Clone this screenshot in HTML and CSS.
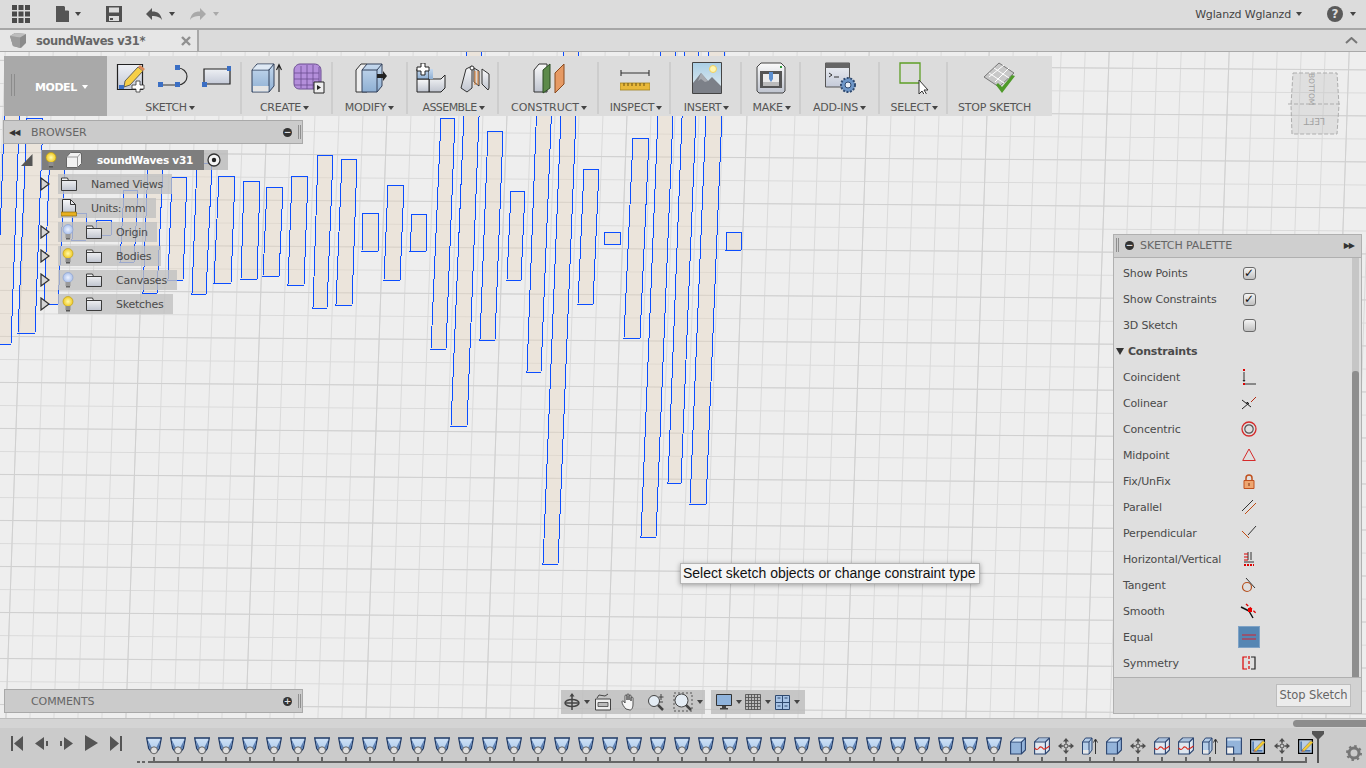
FILE: index.html
```html
<!DOCTYPE html>
<html lang="en">
<head>
<meta charset="utf-8">
<title>soundWaves v31</title>
<link rel="stylesheet" href="styles.css">
</head>
<body>
<svg class="defs" width="0" height="0" aria-hidden="true">
  <defs>
    <linearGradient id="gBlue" x1="0" y1="0" x2="0" y2="1"><stop offset="0" stop-color="#c6d9ee"/><stop offset="1" stop-color="#8eafd3"/></linearGradient>
    <linearGradient id="gGray" x1="0" y1="0" x2="0" y2="1"><stop offset="0" stop-color="#fafafa"/><stop offset="1" stop-color="#bfc4cf"/></linearGradient>
    <linearGradient id="gBack" x1="0" y1="0" x2="0" y2="1"><stop offset="0" stop-color="#eef0f4"/><stop offset="1" stop-color="#c4cad8"/></linearGradient>
    <linearGradient id="gSky" x1="0" y1="0" x2="0" y2="1"><stop offset="0" stop-color="#a9cfe6"/><stop offset="1" stop-color="#e8eef0"/></linearGradient>
    <linearGradient id="gFillet" x1="0" y1="0" x2="0" y2="1"><stop offset="0" stop-color="#cfe2f6"/><stop offset="1" stop-color="#aac8ea"/></linearGradient>
    <radialGradient id="gYellow"><stop offset="0" stop-color="#fffbb0"/><stop offset="1" stop-color="#f0c820"/></radialGradient>
    <radialGradient id="gPale"><stop offset="0" stop-color="#eef3ff"/><stop offset="1" stop-color="#a9bfea"/></radialGradient>
    <pattern id="gridMinor" width="24" height="23" patternUnits="userSpaceOnUse" patternTransform="translate(6 14) skewX(-2) skewY(0.4)">
      <path d="M.5 0V23M0 .5H24" fill="none" stroke="#dadada" stroke-width="1"/>
    </pattern>
    <pattern id="gridMajor" width="120" height="46" patternUnits="userSpaceOnUse" patternTransform="translate(30 14) skewX(-2) skewY(0.4)">
      <path d="M.5 0V46M0 .5H120" fill="none" stroke="#d0d0d0" stroke-width="1"/>
    </pattern>

    <symbol id="fillet" viewBox="0 0 16 18"><path d="M.7 1h14.600l-2 10.500L10.500 15h-5L2.700 11.500z" fill="url(#gFillet)" stroke="#1f3a66" stroke-width="1.300"/><path d="M1.600 2.500L6.500 12H3.400zM14.400 2.500L9.500 12h3.100z" fill="#5f83b6"/><circle cx="8" cy="13.300" r="3.500" fill="#dedede" stroke="#5a5a5a" stroke-width=".9"/></symbol>
    <symbol id="box" viewBox="0 0 16 18"><path d="M.6 5l4-4h10.800v12l-4 4H.6z" fill="#94b4da" stroke="#2a4470" stroke-width="1.100"/><path d="M.6 5h10.800v12M11.400 5l4-4" fill="none" stroke="#2a4470" stroke-width="1.100"/><path d="M1.500 4.500l3.500-3h9.500l-3.500 3z" fill="#d6e4f3"/></symbol>
    <symbol id="boxred" viewBox="0 0 16 18"><path d="M.6 5l4-4h10.800v12l-4 4H.6z" fill="#dfe7f0" stroke="#2a4470" stroke-width="1.100"/><path d="M1.500 4.500l3.500-3h9.500l-3.500 3z" fill="#a9c2de"/><path d="M.6 5h10.800v12M11.400 5l4-4" fill="none" stroke="#2a4470" stroke-width="1.100"/><path d="M.5 11c2 2 3 2 4.500 0s3-1 4 .5 3 0 6.500-2.500" fill="none" stroke="#d8281c" stroke-width="1.100"/></symbol>
    <symbol id="move" viewBox="0 0 16 18"><g fill="#4e4e4e"><path d="M8 1l3 3.500H5zM8 17l3-3.500H5zM0 9l3.500-3v6zM16 9l-3.500-3v6z"/><path d="M7.300 4h1.400v2.500H7.300zM7.300 11.500h1.400V14H7.300zM3 8.300h2.500v1.400H3zM10.500 8.300H13v1.400h-2.500z"/></g><circle cx="8" cy="9" r="2" fill="none" stroke="#4e4e4e"/></symbol>
    <symbol id="extrude" viewBox="0 0 16 18"><path d="M.5 5l3-4h6.500v12l-3 4H.5z" fill="#b5cde8" stroke="#2a4470"/><path d="M.5 5h6.500v12M7 5l3-4" fill="none" stroke="#2a4470"/><path d="M1 13h5.500v3.500H1z" fill="#e8e8e8"/><path d="M13.500 17V3M11.500 5.500l2-3.500 2 3.500" fill="none" stroke="#333"/></symbol>
    <symbol id="combine" viewBox="0 0 16 18"><path d="M.6 1h14.800v16H.6z" fill="#94b4da" stroke="#2a4470" stroke-width="1.100"/><path d="M.6 10h7v7h-7z" fill="#eee" stroke="#2a4470" stroke-width="1.100"/><path d="M1.500 1.600h13v2h-13z" fill="#d6e4f3"/></symbol>
    <symbol id="tlsketch" viewBox="0 0 18 18"><path d="M.7 1.700h15.500v15.500H.7z" fill="#b9cde4" stroke="#000" stroke-width="1.400"/><path d="M3.500 4v10.500H14" fill="none" stroke="#2a5a9a" stroke-width="1.300"/><path d="M4.500 13.500L14.500 3l2.500 2L7 15z" fill="#f6cc32" stroke="#5a5a5a" stroke-width=".5"/><path d="M4.500 13.500L7 15l-3 1z" fill="#cf7a4a"/></symbol>

    <symbol id="bulbOn" viewBox="0 0 12 16"><circle cx="6" cy="5.500" r="5" fill="url(#gYellow)" stroke="#b99a10" stroke-width=".6"/><path d="M3.500 10h5v4h-5z" fill="#8d8d8d"/><path d="M4 14h4v1.500H4z" fill="#555"/></symbol>
    <symbol id="bulbOff" viewBox="0 0 12 16"><circle cx="6" cy="5.500" r="5" fill="url(#gPale)" stroke="#8aa0cc" stroke-width=".6"/><path d="M3.500 10h5v4h-5z" fill="#9a9a9a"/><path d="M4 14h4v1.500H4z" fill="#666"/></symbol>
    <symbol id="folder" viewBox="0 0 16 14"><path d="M.5 13.500V1h6l1 2.500h8v10z" fill="url(#gGray)" stroke="#3b3b3b"/><path d="M.5 3.500h15" stroke="#3b3b3b" fill="none"/></symbol>
    <symbol id="tri" viewBox="0 0 10 14"><path d="M1 1l8 6-8 6z" fill="#d5d5d5" stroke="#2f2f2f" stroke-width="1.200"/></symbol>
  </defs>
</svg>

<div class="app">
  <header class="topbar">
    <div class="top-left">
      <svg class="ic-grid" width="18" height="18" viewBox="0 0 18 18"><path d="M0 0h5v5H0zM6.500 0h5v5h-5zM13 0h5v5h-5zM0 6.500h5v5H0zM6.500 6.500h5v5h-5zM13 6.500h5v5h-5zM0 13h5v5H0zM6.500 13h5v5h-5zM13 13h5v5h-5z" fill="#4b4b4b"/></svg>
      <span class="top-item ti-file"><svg width="14" height="16" viewBox="0 0 14 16"><path d="M0 0h8l5 5v11H0z" fill="#555"/><path d="M9 0l4.500 4.500H9z" fill="#ddd"/></svg><i class="caret dark"></i></span>
      <svg class="ti-save" width="16" height="16" viewBox="0 0 16 16"><path d="M0 0h16v16H0z" fill="#505050"/><path d="M3 1.500h10v5H3z" fill="#dcdcdc"/><path d="M3 10h10v5H3z" fill="#dcdcdc"/><path d="M4 12h3v2H4z" fill="#505050"/></svg>
      <span class="top-item ti-undo"><svg width="16" height="12" viewBox="0 0 16 12"><path d="M6 0v3.500c6 0 9 2.500 10 8.500-2-3-5-4-10-4v4L0 6z" fill="#555"/></svg><i class="caret dark"></i></span>
      <span class="top-item ti-redo"><svg width="16" height="12" viewBox="0 0 16 12"><path d="M10 0v3.500C4 3.500 1 6 0 12c2-3 5-4 10-4v4l6-6z" fill="#a9a9a9"/></svg><i class="caret light"></i></span>
    </div>
    <div class="top-right">
      <span class="user">Wglanzd Wglanzd</span><i class="caret dark"></i>
      <span class="help">?</span><i class="caret dark"></i>
    </div>
  </header>

  <nav class="tabbar">
    <div class="tab">
      <svg width="16" height="15" viewBox="0 0 16 15"><path d="M0 3l5-3 11 1v9l-5 5-8-2z" fill="#8b8b8b"/><path d="M0 3l10 1.500V15l-7-2z" fill="#9c9c9c"/><path d="M0 3l5-3 11 1-6 3.500z" fill="#bdbdbd"/></svg>
      <span class="tab-title">soundWaves v31*</span>
      <svg class="tab-close" width="10" height="10" viewBox="0 0 10 10"><path d="M1 1l8 8M9 1l-8 8" stroke="#909090" stroke-width="2.400" fill="none"/></svg>
    </div>
    <svg class="tab-collapse" width="13" height="7" viewBox="0 0 13 7"><path d="M1 6l5.500-5L12 6" fill="none" stroke="#777" stroke-width="2"/></svg>
  </nav>

  <main class="viewport">
    <svg class="scene" width="1366" height="666" viewBox="0 52 1366 666">
      <rect x="0" y="52" width="1366" height="666" fill="#eeeeee"/>
      <rect x="0" y="52" width="1366" height="666" fill="url(#gridMinor)"/>
      <rect x="0" y="52" width="1366" height="666" fill="url(#gridMajor)"/>
      <g class="bars">
        <polygon points="5,100 20,100 11,344 -4,344"/>
        <polygon points="27,118 43,118 35,333 18,333"/>
        <polygon points="50,150 66,150 58,304 44,304"/>
        <polygon points="73,213 87,213 86,240 72,240"/>
        <polygon points="97,220 112,220 111,235 96,235"/>
        <polygon points="124,190 138,190 134,262 120,262"/>
        <polygon points="148,165 163,165 157,293 143,293"/>
        <polygon points="172,177 187,177 183,280 168,280"/>
        <polygon points="197,163 212,163 206,294 192,294"/>
        <polygon points="219,176 235,176 231,283 214,283"/>
        <polygon points="244,181 260,181 257,279 241,279"/>
        <polygon points="267,187 283,187 279,276 263,276"/>
        <polygon points="292,176 308,176 304,285 288,285"/>
        <polygon points="318,155 333,155 327,308 313,308"/>
        <polygon points="342,159 357,159 352,305 336,305"/>
        <polygon points="363,213 379,213 378,251 362,251"/>
        <polygon points="388,185 404,185 400,280 384,280"/>
        <polygon points="412,214 427,214 426,251 410,251"/>
        <polygon points="441,118 455,118 446,349 431,349"/>
        <polygon points="467,40 482,40 467,426 451,426"/>
        <polygon points="488,131 503,131 495,340 480,340"/>
        <polygon points="511,191 525,191 521,280 507,280"/>
        <polygon points="537,100 552,100 541,372 527,372"/>
        <polygon points="564,40 579,40 558,564 543,564"/>
        <polygon points="584,169 599,169 593,304 578,304"/>
        <polygon points="604,232 620,232 620,244 604,244"/>
        <polygon points="633,138 649,138 640,338 624,338"/>
        <polygon points="661,40 676,40 656,537 641,537"/>
        <polygon points="685,40 699,40 681,483 668,483"/>
        <polygon points="709,40 725,40 706,504 690,504"/>
        <polygon points="727,232 742,232 741,250 726,250"/>
      </g>
      <g class="cube">
        <path class="cube-face" d="M1293 73h44l2 32-2 29h-45l-1-29z"/>
        <path class="cube-line" d="M1293 73h44l2 32-2 29h-45l-1-29zM1288 104h52"/>
        <text class="cube-text top" transform="translate(1309 73) rotate(90)">BOTTOM</text>
        <text class="cube-text" transform="translate(1325 118) rotate(180)">LEFT</text>
      </g>
    </svg>

    <section class="toolbar">
      <div class="model"><span class="grip"></span><span class="model-label">MODEL</span><i class="caret white"></i></div>

      <div class="tool-group w-sketch">
        <div class="tool-icons gap-sketch">
          <svg width="30" height="30" viewBox="0 0 30 30"><path d="M1.500 1.500h25v25h-25z" fill="url(#gBack)" stroke="#222" stroke-width="1.200"/><path d="M9 18L22 4l5 4-13 14-6 2z" fill="#f6cf46" stroke="#444" stroke-width=".8"/><path d="M22 4l2-2 5 4-2 2z" fill="#d98b5a"/><path d="M3 22h5v4H3z" fill="#3b6fc4"/><path d="M21 19h4v4h4v4h-4v3h-4v-3h-4v-4h4z" transform="translate(-1 -1)" fill="#fff" stroke="#333" stroke-width=".8"/></svg>
          <svg width="32" height="30" viewBox="0 0 32 30"><path d="M3 22h17a9 8.500 0 0 0 0-17" fill="none" stroke="#333" stroke-width="1.200"/><path d="M0 19h5v5H0zM17 19h5v5h-5zM17 2h5v5h-5z" fill="#3b6fc4"/></svg>
          <svg width="30" height="30" viewBox="0 0 30 30"><path d="M2 6h26v15H2z" fill="url(#gBack)" stroke="#222" stroke-width="1.200"/><path d="M0 19h5v5H0zM25 3h4v5h-4z" fill="#3b6fc4"/></svg>
        </div>
        <div class="tool-label">SKETCH<i class="caret dark"></i></div>
      </div>

      <div class="tool-group w-create">
        <div class="tool-icons gap-create">
          <svg width="32" height="32" viewBox="0 0 32 32"><path d="M1 8l5-6h17v22l-5 6H1z" fill="url(#gBlue)" stroke="#33415a"/><path d="M1 8h17v22M18 8l5-6" fill="none" stroke="#33415a"/><path d="M1.500 7.500l5-5h15l-4.500 5z" fill="#dfe9f4"/><path d="M2 24h15.500v5.500H2z" fill="#e4e4e4"/><path d="M28 30V4M25.500 8L28 2.500 30.500 8" fill="none" stroke="#222" stroke-width="1.100"/></svg>
          <svg width="32" height="32" viewBox="0 0 32 32"><path d="M1 8c0-3 3-6 6-6h14c5 0 7 3 7 7v18H7c-4 0-6-2-6-6z" fill="#b48fdb" stroke="#6a4c91"/><path d="M1 11h25M1 17h25M1 23h20M8 4v22M14 3v24M20 3v24M26 5v17" fill="none" stroke="#6a4c91" stroke-width=".8"/><path d="M21 20h10v11H21z" fill="#eee" stroke="#222"/><path d="M24 23v5l4-2.500z" fill="#222"/></svg>
        </div>
        <div class="tool-label">CREATE<i class="caret dark"></i></div>
      </div>

      <div class="tool-group w-modify">
        <div class="tool-icons">
          <svg width="32" height="32" viewBox="0 0 32 32"><path d="M1 8l5-6h6v28H1z" fill="#eee" stroke="#333"/><path d="M7 8l5-6h15v22l-5 6H7z" fill="url(#gBlue)" stroke="#33415a"/><path d="M7 8h15v22M22 8l5-6" fill="none" stroke="#33415a"/><path d="M22 12h6v-3l4 5-4 5v-3h-6z" fill="#222"/></svg>
        </div>
        <div class="tool-label">MODIFY<i class="caret dark"></i></div>
      </div>

      <div class="tool-group w-assemble">
        <div class="tool-icons gap-assemble">
          <svg width="30" height="30" viewBox="0 0 30 30"><path d="M13 16h12l4-4v13l-4 4H13z" fill="url(#gGray)" stroke="#222"/><path d="M1 16h12v13H1z" fill="url(#gGray)" stroke="#222"/><path d="M1 16V6h12v10z" fill="url(#gBlue)" stroke="#222"/><path d="M13 6h6l-2 0v10h-4z" fill="url(#gBlue)"/><path d="M5 0h4v4h4v4H9v4H5V8H1V4h4z" fill="#fff" stroke="#222"/></svg>
          <svg width="30" height="30" viewBox="0 0 30 30"><path d="M1 25L6 6l6-3v22l-5 4z" fill="url(#gGray)" stroke="#333"/><path d="M29 25V11l-7-5v15l6 6z" fill="url(#gGray)" stroke="#333"/><path d="M14 5l5 3v15l-5-4z" fill="#d6d6d6" stroke="#333"/><path d="M15 8v14M18 8v14" stroke="#e08030" fill="none"/><circle cx="12" cy="5" r="2" fill="#fff" stroke="#333"/></svg>
        </div>
        <div class="tool-label">ASSEMBLE<i class="caret dark"></i></div>
      </div>

      <div class="tool-group w-construct">
        <div class="tool-icons">
          <svg width="32" height="32" viewBox="0 0 32 32"><path d="M1 8l5-6h8v28H1z" fill="url(#gGray)" stroke="#333"/><path d="M10 8l7-6v24l-7 5z" fill="#5c8a4a" stroke="#2d4d24"/><path d="M22 11l9-9v20l-9 9z" fill="#e69a64" stroke="#8a4a1e"/></svg>
        </div>
        <div class="tool-label">CONSTRUCT<i class="caret dark"></i></div>
      </div>

      <div class="tool-group w-inspect">
        <div class="tool-icons">
          <svg width="30" height="30" viewBox="0 0 30 30"><path d="M1 7v6M29 7v6M1 10h28" fill="none" stroke="#333" stroke-width="1.100"/><path d="M0 20h30v7H0z" fill="#e8b83a" stroke="#a08020" stroke-width=".8"/><path d="M4 20v3M8 20v3M12 20v3M16 20v3M20 20v3M24 20v3" stroke="#6a5010" fill="none"/></svg>
        </div>
        <div class="tool-label">INSPECT<i class="caret dark"></i></div>
      </div>

      <div class="tool-group w-insert">
        <div class="tool-icons">
          <svg width="30" height="32" viewBox="0 0 30 32"><path d="M.5.5h29v31H.5z" fill="url(#gSky)" stroke="#444"/><circle cx="21" cy="7" r="3.500" fill="#fff6b0" stroke="#f0d060"/><path d="M1 31V21l8-10 7 8 4-4 9 9v7z" fill="#7c8088"/><path d="M9 11l7 8-3 1-4-3-3 2z" fill="#a7aab0"/></svg>
        </div>
        <div class="tool-label">INSERT<i class="caret dark"></i></div>
      </div>

      <div class="tool-group w-make">
        <div class="tool-icons">
          <svg width="30" height="32" viewBox="0 0 30 32"><path d="M1 5l4-4h20l4 4v24l-2 2H3l-2-2z" fill="url(#gGray)" stroke="#444"/><path d="M4 9h22v17H4z" fill="#555"/><path d="M7 12h16v11H7z" fill="#ececec"/><path d="M13 10h4v7l-2 3-2-3z" fill="#5b8fd0"/><path d="M7 20h16v4H7z" fill="#bbb"/><path d="M24 4h2v2h-2z" fill="#2e9a3a"/></svg>
        </div>
        <div class="tool-label">MAKE<i class="caret dark"></i></div>
      </div>

      <div class="tool-group w-addins">
        <div class="tool-icons">
          <svg width="32" height="32" viewBox="0 0 32 32"><path d="M.5 1h24v24H.5z" fill="url(#gBack)" stroke="#555"/><path d="M.5 1h24v5H.5z" fill="#666"/><path d="M4 11l3 2-3 2M9 15h5" fill="none" stroke="#333"/><circle cx="23" cy="23" r="7" fill="#6d96c8" stroke="#2f4a70" stroke-width="2" stroke-dasharray="2 1.500"/><circle cx="23" cy="23" r="3" fill="#e8eef6" stroke="#2f4a70"/></svg>
        </div>
        <div class="tool-label">ADD-INS<i class="caret dark"></i></div>
      </div>

      <div class="tool-group w-select">
        <div class="tool-icons">
          <svg width="32" height="32" viewBox="0 0 32 32"><path d="M1 1h20v20H1z" fill="none" stroke="#5e9e26" stroke-width="1.300"/><path d="M20 18v14l3-3 3 5 2-1-3-5h4z" fill="#fff" stroke="#333"/></svg>
        </div>
        <div class="tool-label">SELECT<i class="caret dark"></i></div>
      </div>

      <div class="tool-group w-stop">
        <div class="tool-icons">
          <svg width="34" height="32" viewBox="0 0 34 32"><path d="M1 15L16 1l15 10-15 14z" fill="#c8c8c8" stroke="#777"/><path d="M6 11l15 10M11 6l15 10M12 20L26 6M6 15L21 3" fill="none" stroke="#fff"/><path d="M15 21l4 4 10-12 3 1-13 17-6-8z" fill="#4f9a2a"/></svg>
        </div>
        <div class="tool-label">STOP SKETCH</div>
      </div>
    </section>

    <aside class="browser">
      <div class="panel-head">
        <span class="dbl-left">◀◀</span>
        <span class="panel-title">BROWSER</span>
        <span class="round-btn">−</span>
        <span class="panel-grip"></span>
      </div>
      <div class="tree">
        <div class="tree-root">
          <svg class="root-tri" width="12" height="12" viewBox="0 0 12 12"><path d="M11.500 0v12H0z" fill="#555"/></svg>
          <div class="root-row">
            <div class="root-dark">
              <svg width="12" height="16" viewBox="0 0 12 16"><use href="#bulbOn"/></svg>
              <svg class="root-cube" width="16" height="16" viewBox="0 0 16 16"><path d="M.5 5l4-4.500h11v11l-4 4H.5z" fill="#f2f2f2" stroke="#666"/><path d="M.5 5h11v10.500M11.500 5l4-4.500" fill="none" stroke="#999"/></svg>
              <span class="root-name">soundWaves v31</span>
            </div>
            <svg class="root-radio" width="14" height="14" viewBox="0 0 14 14"><circle cx="7" cy="7" r="6" fill="#f4f4f4" stroke="#333" stroke-width="1.300"/><circle cx="7" cy="7" r="2.200" fill="#222"/></svg>
          </div>
        </div>
        <div class="node"><svg class="node-tri" width="10" height="14"><use href="#tri"/></svg><div class="node-row w-named"><svg class="fold-a" width="16" height="14"><use href="#folder"/></svg><span class="lab-a">Named Views</span></div></div>
        <div class="node"><span class="node-gap"></span><div class="node-row w-units"><svg class="fold-a" width="16" height="18" viewBox="0 0 16 18"><path d="M1.500 14V.5h8l5 5V14z" fill="url(#gGray)" stroke="#333"/><path d="M9.500.5v5h5" fill="none" stroke="#333"/><path d="M0 13h15.500v4H0z" fill="#e8b020" stroke="#8a6a10" stroke-width=".7"/></svg><span class="lab-a">Units: mm</span></div></div>
        <div class="node"><svg class="node-tri" width="10" height="14"><use href="#tri"/></svg><div class="node-row w-origin"><svg class="bulb" width="12" height="16"><use href="#bulbOff"/></svg><svg class="fold-b" width="16" height="14"><use href="#folder"/></svg><span class="lab-b">Origin</span></div></div>
        <div class="node"><svg class="node-tri" width="10" height="14"><use href="#tri"/></svg><div class="node-row w-bodies"><svg class="bulb" width="12" height="16"><use href="#bulbOn"/></svg><svg class="fold-b" width="16" height="14"><use href="#folder"/></svg><span class="lab-b">Bodies</span></div></div>
        <div class="node"><svg class="node-tri" width="10" height="14"><use href="#tri"/></svg><div class="node-row w-canvases"><svg class="bulb" width="12" height="16"><use href="#bulbOff"/></svg><svg class="fold-b" width="16" height="14"><use href="#folder"/></svg><span class="lab-b">Canvases</span></div></div>
        <div class="node"><svg class="node-tri" width="10" height="14"><use href="#tri"/></svg><div class="node-row w-sketches"><svg class="bulb" width="12" height="16"><use href="#bulbOn"/></svg><svg class="fold-b" width="16" height="14"><use href="#folder"/></svg><span class="lab-b">Sketches</span></div></div>
      </div>
    </aside>

    <aside class="comments">
      <span class="panel-title">COMMENTS</span>
      <span class="round-btn">+</span>
      <span class="panel-grip"></span>
    </aside>

    <div class="navbar">
      <div class="nav-seg seg-a">
        <svg width="16" height="18" viewBox="0 0 16 18"><path d="M8 1v16M1 10h14" stroke="#444" stroke-width="1.500" fill="none"/><ellipse cx="8" cy="10" rx="7" ry="3.500" fill="none" stroke="#444" stroke-width="1.500"/><path d="M8 0l2.500 3.500h-5z" fill="#444"/></svg><i class="caret dark"></i>
        <svg class="na" width="16" height="18" viewBox="0 0 16 18"><path d="M.5 6h15v11H.5z" fill="#eee" stroke="#444"/><path d="M3 9.500h10v4H3z" fill="#bbb" stroke="#444" stroke-width=".8"/><path d="M2 5l2-3 6 1 3-2" fill="none" stroke="#444"/></svg>
        <svg class="nb-hand" width="18" height="18" viewBox="0 0 18 18"><path d="M5 16c-2-2-4-5-4-7s2-1 3 1V3c0-1.500 2-1.500 2 0v4-5c0-1.500 2-1.500 2 0v5-4c0-1.500 2-1.500 2 0v5-3c0-1.500 2-1 2 0v6c0 3-1 6-3 6z" fill="#f6f6f6" stroke="#444" stroke-width=".9"/></svg>
        <svg class="nb" width="18" height="18" viewBox="0 0 18 18"><circle cx="7" cy="8" r="5.500" fill="#e4ecf4" stroke="#444"/><path d="M11 12l5 5" stroke="#444" stroke-width="2.500"/><path d="M14 1v6M11.500 4h5M12 9h4" stroke="#444" fill="none"/></svg>
        <svg class="nb" width="20" height="20" viewBox="0 0 20 20"><path d="M1 1h18v18H1z" fill="none" stroke="#555" stroke-dasharray="2 2"/><circle cx="8.500" cy="8.500" r="6.500" fill="#e4ecf4" stroke="#444"/><path d="M13 13l5 5" stroke="#444" stroke-width="2.500"/></svg><i class="caret dark"></i>
      </div>
      <div class="nav-seg seg-b">
        <svg width="16" height="16" viewBox="0 0 16 16"><path d="M.5.5h15v11H.5z" fill="#8fb3dc" stroke="#333"/><path d="M6 12h4v2h2v1.500H4V14h2z" fill="#444"/></svg><i class="caret dark"></i>
        <svg class="nc" width="16" height="16" viewBox="0 0 16 16"><path d="M.5.5h15v15H.5zM3.500 0v16M6.500 0v16M9.500 0v16M12.500 0v16M0 3.500h16M0 6.500h16M0 9.500h16M0 12.500h16" fill="#bbb" stroke="#555" stroke-width=".9"/></svg><i class="caret dark"></i>
        <svg class="nd" width="15" height="15" viewBox="0 0 15 15"><path d="M.5.5h14v14H.5z" fill="#a8c4e6" stroke="#2f4a70"/><path d="M.5 7.500h14M7.500 0v15" stroke="#2f4a70"/><path d="M2.500 3h3M9.500 3h3M2.500 11h3M9.500 11h3" stroke="#2f4a70"/></svg><i class="caret dark"></i>
      </div>
    </div>

    <div class="tooltip">Select sketch objects or change constraint type</div>

    <aside class="palette">
      <div class="pal-head">
        <span class="panel-grip left"></span>
        <span class="round-btn">−</span>
        <span class="panel-title">SKETCH PALETTE</span>
        <span class="dbl-right">▶▶</span>
      </div>
      <div class="pal-body">
        <div class="pal-list">
          <div class="pal-row"><span>Show Points</span><span class="check on">✓</span></div>
          <div class="pal-row"><span>Show Constraints</span><span class="check on">✓</span></div>
          <div class="pal-row"><span>3D Sketch</span><span class="check"></span></div>
          <div class="pal-section"><i class="sec-tri"></i>Constraints</div>
          <div class="pal-row"><span>Coincident</span><svg width="14" height="18" viewBox="0 0 14 18"><path d="M2 4v8" stroke="#333"/><path d="M0.500 12l1.500 2 1.500-2z" fill="#222"/><path d="M1 1h2v2H1zM1 15h2v2H1z" fill="#d00"/><path d="M3 16h11" stroke="#333"/></svg></div>
          <div class="pal-row"><span>Colinear</span><svg width="16" height="14" viewBox="0 0 16 14"><path d="M1 13L8 7" stroke="#222"/><path d="M10 6l5-5" stroke="#b52a10"/><path d="M1 4l9 7" stroke="#222"/><path d="M5 6l3 3-1-3z" fill="#111"/></svg></div>
          <div class="pal-row"><span>Concentric</span><svg width="16" height="16" viewBox="0 0 16 16"><circle cx="8" cy="8" r="7" fill="none" stroke="#d52a2a" stroke-width="1.300"/><circle cx="8" cy="8" r="4.200" fill="none" stroke="#555" stroke-width="1.200"/></svg></div>
          <div class="pal-row"><span>Midpoint</span><svg width="14" height="14" viewBox="0 0 14 14"><path d="M7 1l6.300 11.500H.7z" fill="none" stroke="#d52a2a"/></svg></div>
          <div class="pal-row"><span>Fix/UnFix</span><svg width="12" height="15" viewBox="0 0 12 15"><path d="M3 7V4a3 3 0 0 1 6 0v3" fill="none" stroke="#c0501e" stroke-width="1.500"/><path d="M1 6.500h10v8H1z" fill="#eea670" stroke="#c0501e"/><path d="M5.500 9h1v3h-1z" fill="#7a3010"/></svg></div>
          <div class="pal-row"><span>Parallel</span><svg width="16" height="16" viewBox="0 0 16 16"><path d="M1 12L12 1" stroke="#333"/><path d="M4 15L15 4" stroke="#c04a10"/></svg></div>
          <div class="pal-row"><span>Perpendicular</span><svg width="16" height="16" viewBox="0 0 16 16"><path d="M1 6l7 7" stroke="#c04a10"/><path d="M7 10l8-9" stroke="#333"/></svg></div>
          <div class="pal-row"><span>Horizontal/Vertical</span><svg width="12" height="16" viewBox="0 0 12 16"><path d="M5 1v8M8 1v8" stroke="#333"/><path d="M1 3h4M1 6h4M1 9h4" stroke="#d00"/><path d="M1 11h10" stroke="#333"/><path d="M1 14h10" stroke="#d00" stroke-width="2" stroke-dasharray="2 1"/></svg></div>
          <div class="pal-row"><span>Tangent</span><svg width="16" height="16" viewBox="0 0 16 16"><circle cx="6" cy="10" r="4.500" fill="none" stroke="#b5501e" stroke-width="1.200"/><path d="M5 1l9 10" stroke="#333"/></svg></div>
          <div class="pal-row"><span>Smooth</span><svg width="18" height="16" viewBox="0 0 18 16"><path d="M1 4l8 4M9 8l4 7" stroke="#111" stroke-width="1.400"/><path d="M6 1l11 10" stroke="#d00" stroke-width="1.400" stroke-dasharray="3 2"/><path d="M8 5h4v4H8z" fill="#e00"/></svg></div>
          <div class="pal-row"><span>Equal</span><span class="eq-active"><svg width="14" height="6" viewBox="0 0 14 6"><path d="M0 1h14M0 5h14" stroke="#d8202c"/></svg></span></div>
          <div class="pal-row"><span>Symmetry</span><svg width="14" height="14" viewBox="0 0 14 14"><path d="M5 1H1v12h4" fill="none" stroke="#d00" stroke-width="1.200"/><path d="M9 1h4v12H9" fill="none" stroke="#222" stroke-width="1.200"/><path d="M7 0v14" stroke="#d00" stroke-width="1.200" stroke-dasharray="3 2"/></svg></div>
        </div>
        <div class="pal-scroll"><div class="pal-thumb"></div></div>
      </div>
      <div class="pal-foot"><span class="stop-btn">Stop Sketch</span></div>
    </aside>
  </main>

  <footer class="timeline">
    <div class="tl-band"><div class="tl-scroll"></div></div>
    <div class="tl-row">
      <div class="tl-controls">
        <svg width="12" height="15" viewBox="0 0 12 15"><path d="M0 0h2v15H0zM12 0v15L3 7.500z" fill="#555"/></svg>
        <svg width="13" height="15" viewBox="0 0 13 15"><path d="M9 1v13L0 7.500zM11 5h2v5h-2z" fill="#555"/></svg>
        <svg width="13" height="15" viewBox="0 0 13 15"><path d="M4 1v13l9-6.500zM0 5h2v5H0z" fill="#555"/></svg>
        <svg width="13" height="16" viewBox="0 0 13 16"><path d="M0 0v16l13-8z" fill="#555"/></svg>
        <svg width="12" height="15" viewBox="0 0 12 15"><path d="M10 0h2v15h-2zM0 0v15l9-7.500z" fill="#555"/></svg>
      </div>
      <div class="tl-track">
        <div class="tl-item"><svg width="16" height="18"><use href="#fillet"/></svg></div><div class="tl-item"><svg width="16" height="18"><use href="#fillet"/></svg></div><div class="tl-item"><svg width="16" height="18"><use href="#fillet"/></svg></div><div class="tl-item"><svg width="16" height="18"><use href="#fillet"/></svg></div><div class="tl-item"><svg width="16" height="18"><use href="#fillet"/></svg></div><div class="tl-item"><svg width="16" height="18"><use href="#fillet"/></svg></div>
        <div class="tl-item"><svg width="16" height="18"><use href="#fillet"/></svg></div><div class="tl-item"><svg width="16" height="18"><use href="#fillet"/></svg></div><div class="tl-item"><svg width="16" height="18"><use href="#fillet"/></svg></div><div class="tl-item"><svg width="16" height="18"><use href="#fillet"/></svg></div><div class="tl-item"><svg width="16" height="18"><use href="#fillet"/></svg></div><div class="tl-item"><svg width="16" height="18"><use href="#fillet"/></svg></div>
        <div class="tl-item"><svg width="16" height="18"><use href="#fillet"/></svg></div><div class="tl-item"><svg width="16" height="18"><use href="#fillet"/></svg></div><div class="tl-item"><svg width="16" height="18"><use href="#fillet"/></svg></div><div class="tl-item"><svg width="16" height="18"><use href="#fillet"/></svg></div><div class="tl-item"><svg width="16" height="18"><use href="#fillet"/></svg></div><div class="tl-item"><svg width="16" height="18"><use href="#fillet"/></svg></div>
        <div class="tl-item"><svg width="16" height="18"><use href="#fillet"/></svg></div><div class="tl-item"><svg width="16" height="18"><use href="#fillet"/></svg></div><div class="tl-item"><svg width="16" height="18"><use href="#fillet"/></svg></div><div class="tl-item"><svg width="16" height="18"><use href="#fillet"/></svg></div><div class="tl-item"><svg width="16" height="18"><use href="#fillet"/></svg></div><div class="tl-item"><svg width="16" height="18"><use href="#fillet"/></svg></div>
        <div class="tl-item"><svg width="16" height="18"><use href="#fillet"/></svg></div><div class="tl-item"><svg width="16" height="18"><use href="#fillet"/></svg></div><div class="tl-item"><svg width="16" height="18"><use href="#fillet"/></svg></div><div class="tl-item"><svg width="16" height="18"><use href="#fillet"/></svg></div><div class="tl-item"><svg width="16" height="18"><use href="#fillet"/></svg></div><div class="tl-item"><svg width="16" height="18"><use href="#fillet"/></svg></div>
        <div class="tl-item"><svg width="16" height="18"><use href="#fillet"/></svg></div><div class="tl-item"><svg width="16" height="18"><use href="#fillet"/></svg></div><div class="tl-item"><svg width="16" height="18"><use href="#fillet"/></svg></div><div class="tl-item"><svg width="16" height="18"><use href="#fillet"/></svg></div><div class="tl-item"><svg width="16" height="18"><use href="#fillet"/></svg></div><div class="tl-item"><svg width="16" height="18"><use href="#fillet"/></svg></div>
        <div class="tl-item"><svg width="16" height="18"><use href="#box"/></svg></div>
        <div class="tl-item"><svg width="16" height="18"><use href="#boxred"/></svg></div>
        <div class="tl-item"><svg width="16" height="18"><use href="#move"/></svg></div>
        <div class="tl-item"><svg width="16" height="18"><use href="#extrude"/></svg></div>
        <div class="tl-item"><svg width="16" height="18"><use href="#box"/></svg></div>
        <div class="tl-item"><svg width="16" height="18"><use href="#move"/></svg></div>
        <div class="tl-item"><svg width="16" height="18"><use href="#boxred"/></svg></div>
        <div class="tl-item"><svg width="16" height="18"><use href="#boxred"/></svg></div>
        <div class="tl-item"><svg width="16" height="18"><use href="#extrude"/></svg></div>
        <div class="tl-item"><svg width="16" height="18"><use href="#combine"/></svg></div>
        <div class="tl-item"><svg width="16" height="18"><use href="#tlsketch"/></svg></div>
        <div class="tl-item"><svg width="16" height="18"><use href="#move"/></svg></div>
        <div class="tl-item"><svg width="16" height="18"><use href="#tlsketch"/></svg></div>
      </div>
      <svg class="playhead" width="12" height="32" viewBox="0 0 12 32"><path d="M0 0h12v3L7 8v24H5V8L0 3z" fill="#555"/></svg>
      <svg class="gear" width="16" height="16" viewBox="0 0 16 16"><circle cx="8" cy="8" r="5" fill="none" stroke="#777" stroke-width="3"/><circle cx="8" cy="8" r="7" fill="none" stroke="#777" stroke-width="2" stroke-dasharray="2.500 3"/></svg>
    </div>
  </footer>
</div>
</body>
</html>
```

FILE: styles.css
```css
* { box-sizing: border-box; }
html, body { margin: 0; padding: 0; height: 100%; overflow: hidden; }
body { font-family: "DejaVu Sans", sans-serif; font-size: 11px; color: #4a4a4a; background: #eee; }
svg { display: block; flex: none; }
.defs { position: absolute; }
.app { width: 1366px; height: 768px; display: flex; flex-direction: column; }

.caret { display: inline-block; flex: none; width: 0; height: 0; border-left: 3.500px solid transparent; border-right: 3.500px solid transparent; border-top: 4px solid #444; }
.caret.light { border-top-color: #a9a9a9; }
.caret.white { border-top-color: #fff; }

/* top bar */
.topbar { height: 30px; flex: none; background: #dcdcdc; border-bottom: 2px solid #a6a6a6; display: flex; justify-content: space-between; align-items: center; padding: 0 10px 0 12px; }
.top-left { display: flex; align-items: center; }
.top-item { display: flex; align-items: center; gap: 7px; }
.ti-file { margin-left: 26px; gap: 5px; }
.ti-save { margin-left: 25px; }
.ti-undo { margin-left: 24px; }
.ti-redo { margin-left: 15px; }
.top-right { display: flex; align-items: center; }
.user { font-size: 11px; color: #444; margin-right: 5px; letter-spacing: -.16px; }
.help { width: 16px; height: 16px; border-radius: 50%; background: #5a5a5a; color: #ddd; font-weight: bold; font-size: 12px; line-height: 16px; text-align: center; margin: 0 7px 0 25px; }

/* tabs */
.tabbar { height: 22px; flex: none; background: #dbdbdb; border-bottom: 1px solid #a9a9a9; display: flex; justify-content: space-between; align-items: center; padding-right: 8px; }
.tab { width: 199px; height: 21px; background: #e6e6e6; border-right: 2px solid #a9a9a9; display: flex; align-items: center; padding-left: 10px; }
.tab-title { font-weight: bold; font-size: 11.500px; color: #666; margin-left: 10px; letter-spacing: -.4px; flex: 1; white-space: nowrap; }
.tab-close { margin-right: 6px; }

/* viewport */
.viewport { position: relative; flex: 1; min-height: 0; overflow: hidden; }
.scene { position: absolute; left: 0; top: 0; }
.bars polygon { fill: rgba(230, 214, 192, .42); stroke: #0b4dff; stroke-width: 1; shape-rendering: crispEdges; }
.cube-face { fill: rgba(190, 190, 190, .3); }
.cube-line { fill: none; stroke: #adadad; stroke-dasharray: 4 2; }
.cube-text { font-size: 9px; fill: #a0a0a0; font-family: "DejaVu Sans", sans-serif; }
.cube-text.top { font-size: 7.500px; }

/* toolbar */
.toolbar { position: absolute; left: 4px; top: 4px; width: 1048px; height: 60px; background: #dcdcdc; display: flex; }
.model { width: 103px; flex: none; background: #a9a9a9; display: flex; align-items: center; position: relative; padding: 2px 0 0 31px; gap: 5px; }
.grip { position: absolute; left: 7px; top: 18px; width: 4px; height: 22px; border-left: 1px solid #8c8c8c; border-right: 1px solid #8c8c8c; }
.model-label { color: #fff; font-weight: bold; font-size: 11px; letter-spacing: -.45px; }
.tool-group { flex: none; display: flex; flex-direction: column; align-items: center; border-right: 2px solid #cdcdcd; margin: 6px 0 2px; }
.tool-icons { height: 36px; display: flex; align-items: center; justify-content: center; margin-top: -1px; }
.tool-label { margin-top: 7px; font-size: 11px; line-height: 12px; color: #555; display: flex; align-items: center; gap: 2px; letter-spacing: -.25px; white-space: nowrap; }
.w-sketch { width: 135px; }
.w-create { width: 91px; }
.w-modify { width: 75px; }
.w-assemble { width: 91px; }
.w-construct { width: 100px; }
.w-inspect { width: 72px; }
.w-insert { width: 71px; }
.w-make { width: 59px; }
.w-addins { width: 79px; }
.w-select { width: 68px; }
.w-stop { width: 104px; border-right: 0; }
.gap-sketch { gap: 12px; }
.gap-create { gap: 10px; }
.gap-assemble { gap: 14px; }
.w-sketch .tool-label { margin-right: 7px; }
.w-create .tool-label { margin-right: 4px; }
.w-create .tool-icons, .w-modify .tool-icons, .w-construct .tool-icons, .w-inspect .tool-icons, .w-insert .tool-icons, .w-addins .tool-icons { margin-left: 2px; }
.w-assemble .tool-label { letter-spacing: -.55px; margin-left: 2px; }
.w-construct .tool-label { letter-spacing: -.05px; margin-left: 2px; }
.w-inspect .tool-label { margin-left: 4px; }
.w-insert .tool-label, .w-make .tool-label { margin-left: 2px; }
.w-select .tool-icons, .w-select .tool-label { margin-left: 3px; }
.w-stop .tool-label { margin-right: 11px; }

/* browser */
.browser { position: absolute; left: 3px; top: 68px; width: 300px; }
.panel-head { height: 24px; background: #cbcbcb; border: 1px solid #a9a9a9; display: flex; align-items: center; padding: 0 1px 0 5px; }
.dbl-left { font-size: 8px; letter-spacing: -1px; color: #333; width: 22px; }
.dbl-right { font-size: 8px; letter-spacing: -1px; color: #333; }
.panel-title { flex: 1; font-size: 11px; color: #666; letter-spacing: -.1px; }
.round-btn { width: 9px; height: 9px; border-radius: 50%; background: #333; color: #ddd; font-size: 9px; line-height: 9px; text-align: center; font-weight: bold; margin-right: 6px; flex: none; }
.panel-grip { width: 3px; height: 14px; border-left: 1px solid #8f8f8f; border-right: 1px solid #8f8f8f; flex: none; }
.panel-grip.left { margin: 0 6px 0 2px; }
.tree { padding-top: 6px; display: flex; flex-direction: column; gap: 4px; }
.tree-root { display: flex; align-items: center; padding-left: 18px; }
.root-tri { margin-right: 8px; }
.root-row { width: 187px; height: 20px; background: rgba(186, 186, 186, .8); display: flex; align-items: center; }
.root-dark { width: 162px; height: 100%; margin-left: 1px; background: #7e7e7e; display: flex; align-items: center; padding-left: 3px; }
.root-cube { margin-left: 9px; }
.root-name { color: #fff; font-weight: bold; font-size: 10.500px; margin-left: 15px; letter-spacing: -.25px; white-space: nowrap; }
.root-radio { margin-left: 3px; }
.node { display: flex; align-items: center; padding-left: 37px; height: 20px; }
.node-tri { margin-right: 8px; }
.node-gap { width: 18px; flex: none; }
.node-row { height: 20px; background: rgba(192, 192, 192, .8); display: flex; align-items: center; padding-left: 3px; white-space: nowrap; font-size: 11px; color: #4a4a4a; letter-spacing: -.25px; }
.w-named { width: 114px; }
.w-units { width: 98px; }
.w-origin { width: 99px; }
.w-bodies { width: 103px; }
.w-canvases { width: 119px; }
.w-sketches { width: 115px; }
.lab-a { margin-left: 14px; }
.bulb { margin-left: 1px; }
.fold-b { margin-left: 12px; }
.lab-b { margin-left: 14px; }

/* comments */
.comments { position: absolute; left: 4px; top: 637px; width: 299px; height: 24px; background: #cbcbcb; border: 1px solid #a9a9a9; display: flex; align-items: center; padding: 0 1px 0 26px; }

/* nav */
.navbar { position: absolute; left: 561px; top: 638px; display: flex; gap: 6px; }
.nav-seg { height: 24px; background: rgba(190, 190, 190, .85); display: flex; align-items: center; padding-left: 3px; }
.nav-seg .caret { margin-left: 4px; }
.seg-a { width: 144px; }
.seg-b { width: 94px; padding-left: 5px; }
.na { margin-left: 5px; }
.nb-hand { margin-left: 10px; }
.nb { margin-left: 8px; }
.nc { margin-left: 3px; }
.nd { margin-left: 4px; }

/* tooltip */
.tooltip { position: absolute; left: 680px; top: 511px; width: 300px; height: 21px; background: #f5f5f5; border: 1px solid #b5b5b5; box-shadow: 0 1px 5px rgba(0,0,0,.35); font-family: "Liberation Sans", sans-serif; font-size: 14px; line-height: 19px; color: #111; padding-left: 2px; white-space: nowrap; }

/* palette */
.palette { position: absolute; left: 1113px; top: 182px; width: 249px; height: 480px; border: 1px solid #b0b0b0; background: #dfdfdf; display: flex; flex-direction: column; }
.pal-head { height: 23px; flex: none; background: #cfcfcf; border-bottom: 1px solid #b0b0b0; display: flex; align-items: center; padding: 0 7px 2px 0; }
.pal-head .panel-title { flex: 1; }
.pal-body { flex: 1; min-height: 0; display: flex; }
.pal-list { flex: 1; padding-top: 2px; }
.pal-row { height: 26px; display: grid; grid-template-columns: 115px 22px; justify-items: center; align-items: center; padding-left: 9px; font-size: 11px; color: #4a4a4a; letter-spacing: -.15px; white-space: nowrap; }
.pal-row > span:first-child { justify-self: start; }
.pal-section { height: 26px; display: flex; align-items: center; padding-left: 2px; font-weight: bold; font-size: 11px; letter-spacing: -.2px; gap: 4px; }
.sec-tri { width: 0; height: 0; border-left: 4.500px solid transparent; border-right: 4.500px solid transparent; border-top: 7px solid #333; }
.check { width: 13px; height: 13px; border: 1px solid #6a6a6a; border-radius: 3px; background: linear-gradient(#f4f4f4, #c0c0c0); font-size: 12px; line-height: 11px; text-align: center; color: #111; }
.eq-active { width: 22px; height: 22px; background: #5586b3; border: 1px solid #7ea2c6; display: flex; align-items: center; justify-content: center; }
.pal-scroll { width: 7px; margin-right: 2px; background: #c6c6c6; flex: none; }
.pal-thumb { margin-top: 113px; height: 308px; background: #8e8e8e; border-radius: 3px 3px 0 0; }
.pal-foot { height: 36px; flex: none; background: #d2d2d2; border-top: 1px solid #b0b0b0; display: flex; justify-content: flex-end; align-items: center; padding-right: 10px; }
.stop-btn { width: 75px; height: 23px; background: #ececec; border: 1px solid #bdbdbd; font-size: 11.500px; line-height: 21px; text-align: center; color: #666; letter-spacing: -.05px; white-space: nowrap; }

/* timeline */
.timeline { height: 50px; flex: none; background: #cbcbcb; border-top: 1px solid #bdbdbd; position: relative; }
.tl-band { height: 9px; background: #d4d4d4; position: relative; }
.tl-scroll { position: absolute; left: 1293px; right: 0; top: 1px; height: 7px; background: #8c8c8c; border-radius: 4px 0 0 4px; }
.tl-row { height: 40px; display: flex; position: relative; }
.tl-controls { width: 146px; flex: none; display: flex; align-items: center; gap: 12px; padding: 0 0 10px 11px; }
.tl-track { display: flex; gap: 8px; padding-top: 9px; position: relative; }
.tl-track::before { content: ""; position: absolute; left: -9px; width: 9px; top: 33px; height: 2px; background: repeating-linear-gradient(90deg, #666 0 3px, transparent 3px 5px); }
.tl-track::after { content: ""; position: absolute; left: 2px; right: 7px; top: 33px; height: 2px; background: #666; }
.tl-item { width: 16px; flex: none; position: relative; height: 24px; }
.tl-item::after { content: ""; position: absolute; left: 7px; top: 20px; width: 2px; height: 4px; background: #666; }
.playhead { position: absolute; left: 1312px; top: 3px; }
.gear { position: absolute; left: 1346px; top: 17px; }
```
